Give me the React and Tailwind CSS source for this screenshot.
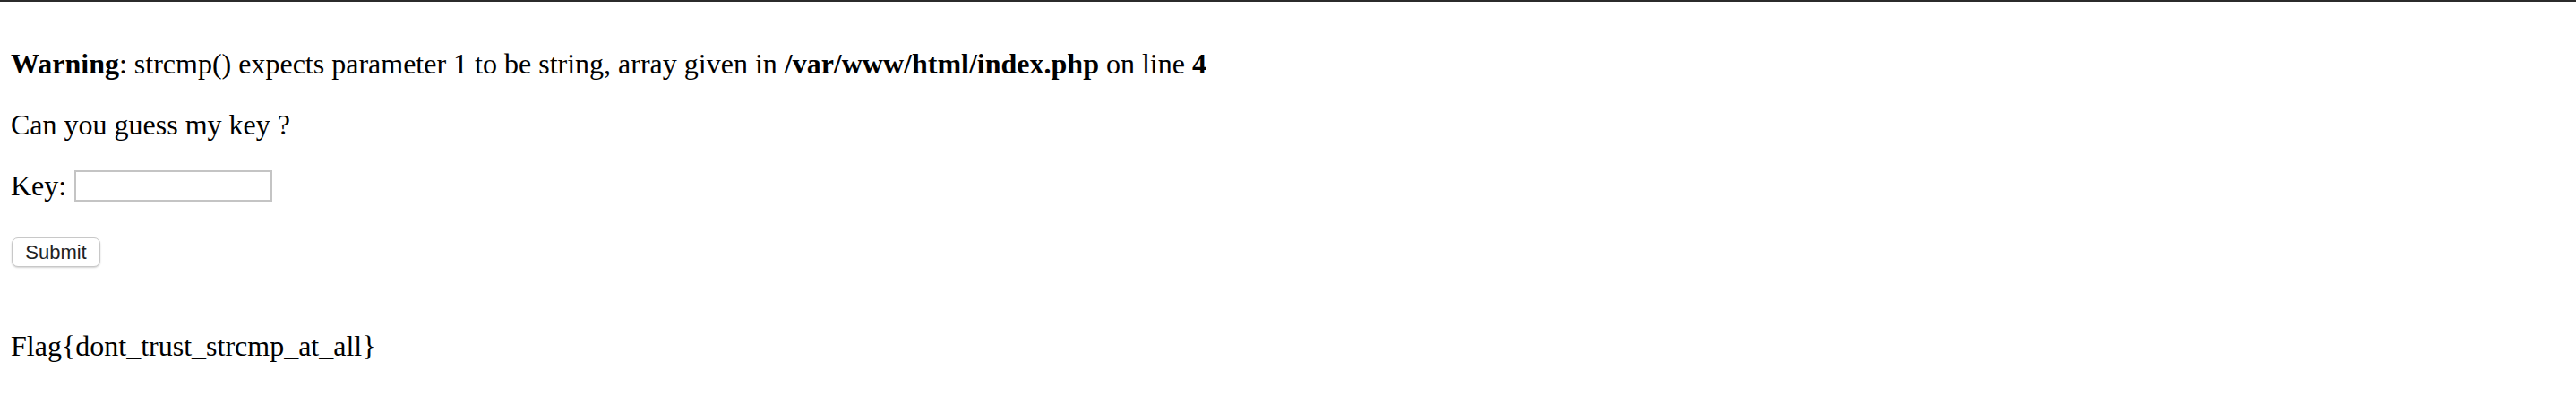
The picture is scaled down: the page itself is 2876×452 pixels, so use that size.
import { useState } from 'react';

const App = () => {
    const [key, setKey] = useState('');

    return (
        <div className="w-full h-[452px] bg-white border-t-2 border-[#2b2b2b] pl-3 text-black text-[32px] leading-[37px] font-['Liberation_Serif',serif] overflow-hidden">
            {/* PHP warning printed before the page */}
            <div className="mt-[51px] whitespace-nowrap">
                <b>Warning</b>: strcmp() expects parameter 1 to be string, array given in <b>/var/www/html/index.php</b> on line <b>4</b>
            </div>

            <p className="mt-[31px]">Can you guess my key ?</p>

            <form onSubmit={(e) => e.preventDefault()}>
                <div className="mt-[31px] flex items-center h-[37px]">
                    <span>Key:</span>
                    <input
                        type="text"
                        name="key"
                        value={key}
                        onChange={(e) => setKey(e.target.value)}
                        className="ml-[9px] w-[221px] h-[35px] border-2 border-[#c4c4c4] bg-white outline-none px-1 text-[26px]"
                    />
                </div>

                <button
                    type="submit"
                    className="mt-[39px] ml-[1px] w-[99px] h-[33px] flex items-center justify-center bg-white border border-[#c8c8c8] rounded-[7px] shadow-[0_1px_2px_rgba(0,0,0,0.18)] text-[22px] leading-none text-[#222] font-['Liberation_Sans',sans-serif]"
                >
                    Submit
                </button>
            </form>

            <div className="mt-[70px]">Flag{'{'}dont_trust_strcmp_at_all{'}'}</div>
        </div>
    );
};

export default App;
